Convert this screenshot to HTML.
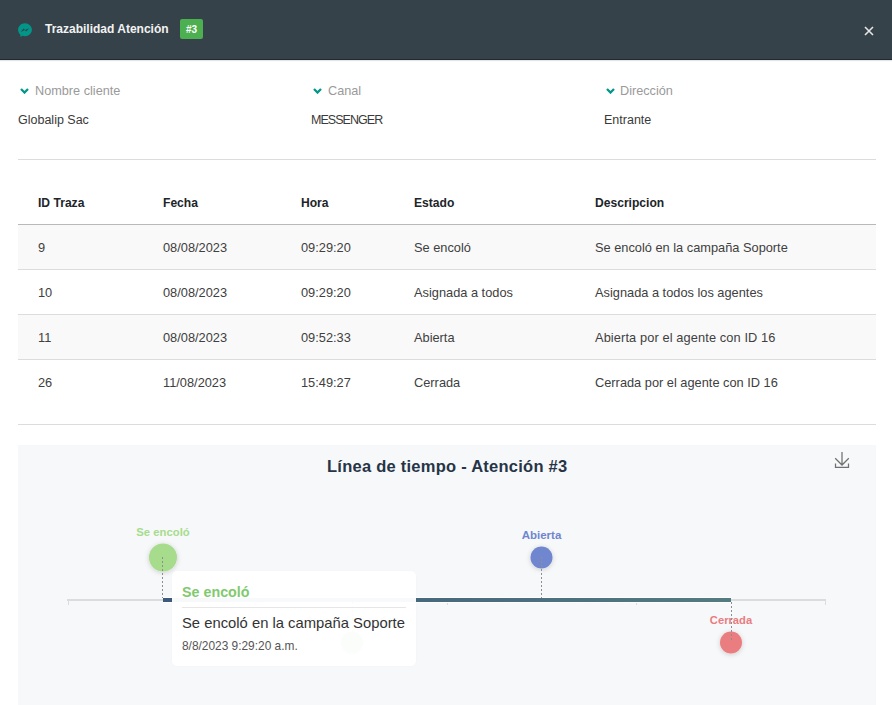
<!DOCTYPE html>
<html><head><meta charset="utf-8">
<style>
*{margin:0;padding:0;box-sizing:border-box}
html,body{width:892px;height:705px;overflow:hidden;background:#fff}
body{position:relative;font-family:"Liberation Sans",sans-serif;color:#333}
.t{position:absolute;white-space:nowrap;line-height:0}
#hdr{position:absolute;left:0;top:0;width:892px;height:60px;background:#35424a;border-bottom:1px solid #1f2a31;box-shadow:0 1px 1px rgba(0,0,0,.1)}
.hr{position:absolute;left:18px;width:858px;height:1px;background:#dcdcdc}
.lbl{color:#9a9a9a;font-size:12.7px}
.val{color:#3a3a3a;font-size:12.5px}
.th{color:#212529;font-weight:bold;font-size:12.1px}
.td{color:#404040;font-size:12.8px}
.row{position:absolute;left:18px;width:858px;height:45px}
.odd{background:#f9f9f9}
.bb{border-bottom:1px solid #dcdcdc}
#panel{position:absolute;left:18px;top:445px;width:858px;height:260px;background:#f7f8fa}
.chev{position:absolute}
</style></head><body>
<div id="hdr"></div>
<!-- messenger icon -->
<svg style="position:absolute;left:17px;top:22px" width="16" height="16" viewBox="0 0 16 16">
  <path d="M8 1.2C4.1 1.2 1.1 4.1 1.1 7.8c0 2 .9 3.7 2.3 4.9v2.3l2.1-1.2c.8.2 1.6.4 2.5.4 3.9 0 6.9-2.9 6.9-6.4S11.9 1.2 8 1.2z" fill="#009688"/>
  <path d="M3.7 9.9L6.5 6.5L8.1 8L12.1 6.2L9.3 9.5L7.7 8.1Z" fill="#35424a"/>
</svg>
<div class="t" style="left:45px;top:29px;color:#f2f2f2;font-weight:bold;font-size:12px">Trazabilidad Atención</div>
<div style="position:absolute;left:180px;top:19px;width:23px;height:20px;background:#4caf50;border-radius:2px"></div>
<div class="t" style="left:186px;top:30px;color:#fff;font-weight:bold;font-size:10px">#3</div>
<!-- close -->
<svg style="position:absolute;left:864px;top:25.5px" width="10" height="10" viewBox="0 0 10 10"><path d="M1 1L9 9M9 1L1 9" stroke="#e6e6e6" stroke-width="1.6"/></svg>

<!-- fields -->
<svg class="chev" style="left:20px;top:88px" width="9" height="6" viewBox="0 0 9 6"><path d="M1 1l3.5 3.5L8 1" stroke="#009688" stroke-width="2.3" fill="none"/></svg>
<div class="t lbl" style="left:35px;top:91px">Nombre cliente</div>
<div class="t val" style="left:18px;top:120px">Globalip Sac</div>
<svg class="chev" style="left:313px;top:88px" width="9" height="6" viewBox="0 0 9 6"><path d="M1 1l3.5 3.5L8 1" stroke="#009688" stroke-width="2.3" fill="none"/></svg>
<div class="t lbl" style="left:328px;top:91px">Canal</div>
<div class="t val" style="left:311px;top:120px;letter-spacing:-0.95px">MESSENGER</div>
<svg class="chev" style="left:606px;top:88px" width="9" height="6" viewBox="0 0 9 6"><path d="M1 1l3.5 3.5L8 1" stroke="#009688" stroke-width="2.3" fill="none"/></svg>
<div class="t lbl" style="left:620px;top:91px">Dirección</div>
<div class="t val" style="left:604px;top:120px">Entrante</div>

<div class="hr" style="top:159px"></div>

<!-- table -->
<div class="t th" style="left:38px;top:203px">ID Traza</div>
<div class="t th" style="left:163px;top:203px">Fecha</div>
<div class="t th" style="left:301px;top:203px">Hora</div>
<div class="t th" style="left:414px;top:203px">Estado</div>
<div class="t th" style="left:595px;top:203px">Descripcion</div>
<div class="hr" style="top:224px;background:#b9b9b9"></div>
<div class="row odd bb" style="top:225px"></div>
<div class="row bb" style="top:270px"></div>
<div class="row odd bb" style="top:315px"></div>
<div class="row" style="top:360px"></div>

<div class="t td" style="left:38px;top:248px">9</div>
<div class="t td" style="left:163px;top:248px">08/08/2023</div>
<div class="t td" style="left:301px;top:248px">09:29:20</div>
<div class="t td" style="left:414px;top:248px">Se encoló</div>
<div class="t td" style="left:595px;top:248px">Se encoló en la campaña Soporte</div>

<div class="t td" style="left:38px;top:293px">10</div>
<div class="t td" style="left:163px;top:293px">08/08/2023</div>
<div class="t td" style="left:301px;top:293px">09:29:20</div>
<div class="t td" style="left:414px;top:293px">Asignada a todos</div>
<div class="t td" style="left:595px;top:293px">Asignada a todos los agentes</div>

<div class="t td" style="left:38px;top:338px">11</div>
<div class="t td" style="left:163px;top:338px">08/08/2023</div>
<div class="t td" style="left:301px;top:338px">09:52:33</div>
<div class="t td" style="left:414px;top:338px">Abierta</div>
<div class="t td" style="left:595px;top:338px;letter-spacing:0.11px">Abierta por el agente con ID 16</div>

<div class="t td" style="left:38px;top:383px">26</div>
<div class="t td" style="left:163px;top:383px">11/08/2023</div>
<div class="t td" style="left:301px;top:383px">15:49:27</div>
<div class="t td" style="left:414px;top:383px">Cerrada</div>
<div class="t td" style="left:595px;top:383px">Cerrada por el agente con ID 16</div>

<div class="hr" style="top:424px"></div>

<!-- timeline panel -->
<div id="panel"></div>
<div class="t" style="left:327px;top:466px;color:#263447;font-weight:bold;font-size:16.5px;letter-spacing:0.25px">Línea de tiempo - Atención #3</div>
<svg style="position:absolute;left:834px;top:451px" width="17" height="18" viewBox="0 0 17 18"><path d="M8 1v13M1.2 7.2L8 14l6.8-6.8M1.5 12.5v3.8h13v-3.8" stroke="#707070" stroke-width="1.25" fill="none"/></svg>

<svg style="position:absolute;left:0;top:0" width="892" height="705" viewBox="0 0 892 705">
  <defs>
    <linearGradient id="bar" x1="163" y1="0" x2="731" y2="0" gradientUnits="userSpaceOnUse">
      <stop offset="0" stop-color="#3d5a7c"/><stop offset="1" stop-color="#537b80"/>
    </linearGradient>
    <filter id="sh" x="-50%" y="-50%" width="200%" height="200%"><feDropShadow dx="0" dy="1" stdDeviation="2.5" flood-color="#000" flood-opacity="0.18"/></filter>
  </defs>
  <rect x="67" y="599" width="759" height="2" fill="#dcdcdc"/>
  <rect x="68" y="601" width="1" height="4" fill="#dcdcdc"/>
  <rect x="257" y="601" width="1" height="4" fill="#dcdcdc"/>
  <rect x="447" y="601" width="1" height="4" fill="#dcdcdc"/>
  <rect x="636" y="601" width="1" height="4" fill="#dcdcdc"/>
  <rect x="825" y="601" width="1" height="4" fill="#dcdcdc"/>
  <rect x="163" y="597" width="568" height="6" fill="#fff"/>
  <rect x="163" y="598" width="568" height="4" fill="url(#bar)"/>
  <!-- circles -->
  <circle cx="163" cy="557.5" r="14" fill="#a6dc8c" filter="url(#sh)"/>
  <circle cx="352" cy="642.5" r="11" fill="#8cc9a0" filter="url(#sh)"/>
  <circle cx="541.5" cy="557.5" r="11" fill="#6f86cf" filter="url(#sh)"/>
  <circle cx="731" cy="642.5" r="11" fill="#e97d80" filter="url(#sh)"/>
  <!-- labels -->
  <text x="163" y="535.6" text-anchor="middle" font-family="Liberation Sans" font-weight="bold" font-size="11.3" fill="#a6dc8c">Se encoló</text>
  <text x="352" y="624" text-anchor="middle" font-family="Liberation Sans" font-weight="bold" font-size="11.3" fill="#8cc9a0">Asignada a todos</text>
  <text x="541.5" y="539" text-anchor="middle" font-family="Liberation Sans" font-weight="bold" font-size="11.5" fill="#6f86cf">Abierta</text>
  <text x="731" y="624" text-anchor="middle" font-family="Liberation Sans" font-weight="bold" font-size="11.2" fill="#e97d80">Cerrada</text>
  <!-- dotted lines -->
  <g stroke="#8e8e8e" stroke-width="1" stroke-dasharray="2,2">
    <line x1="162.5" y1="557" x2="162.5" y2="598"/>
    <line x1="352.5" y1="602" x2="352.5" y2="642"/>
    <line x1="541.5" y1="557" x2="541.5" y2="598"/>
    <line x1="731.5" y1="602" x2="731.5" y2="642"/>
  </g>
</svg>

<!-- tooltip -->
<div style="position:absolute;left:172px;top:571px;width:244px;height:95px;background:rgba(255,255,255,.96);border-radius:5px;box-shadow:0 0 2px rgba(0,0,0,.03)"></div>
<div class="t" style="left:182px;top:592px;color:#81c96f;font-weight:bold;font-size:14.3px">Se encoló</div>
<div style="position:absolute;left:182px;top:607px;width:224px;height:1px;background:#e6e6e6"></div>
<div class="t" style="left:182px;top:623px;color:#333;font-size:14.8px">Se encoló en la campaña Soporte</div>
<div class="t" style="left:182px;top:646px;color:#555;font-size:11.9px">8/8/2023 9:29:20 a.m.</div>
</body></html>
